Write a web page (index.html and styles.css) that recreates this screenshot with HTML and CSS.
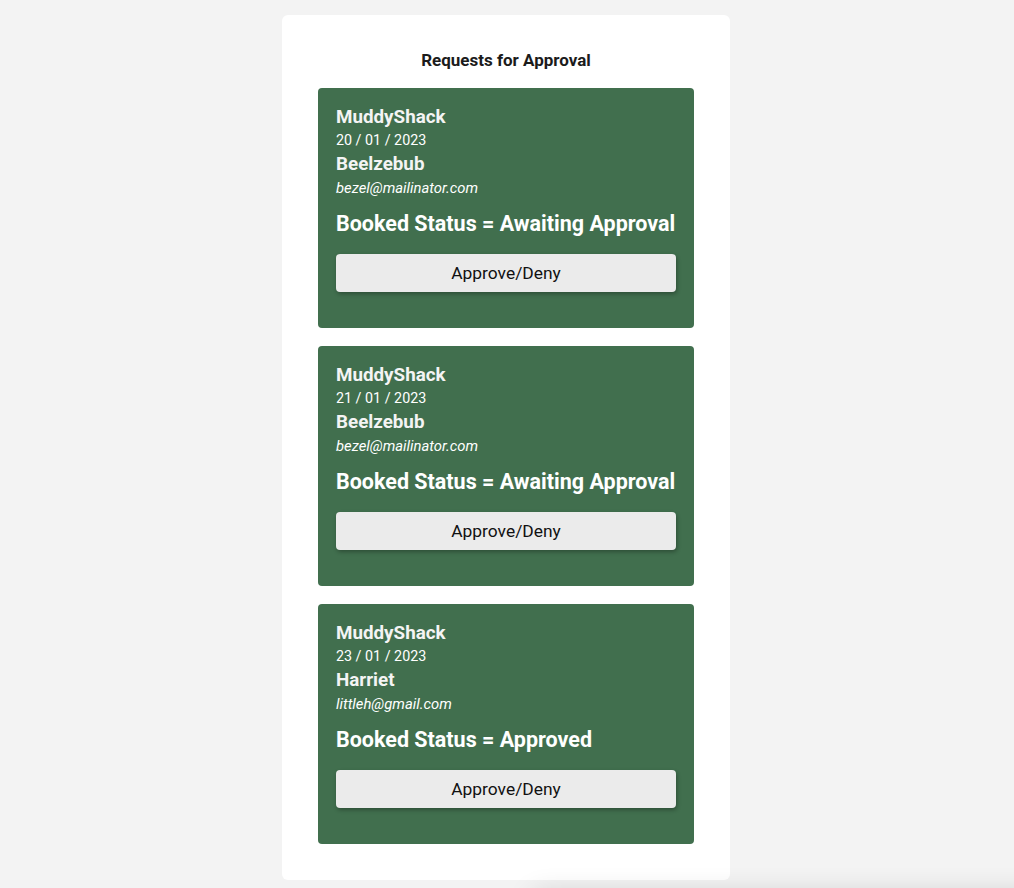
FILE: index.html
```html
<!DOCTYPE html>
<html>
<head>
<meta charset="utf-8">
<link rel="stylesheet" href="styles.css">
</head>
<body>
<main class="panel">
  <h2 class="title">Requests for Approval</h2>
  <div class="card">
    <h3 class="venue">MuddyShack</h3>
    <p class="date">20 / 01 / 2023</p>
    <h3 class="name">Beelzebub</h3>
    <p class="email">bezel@mailinator.com</p>
    <h2 class="status">Booked Status = Awaiting Approval</h2>
    <button class="btn">Approve/Deny</button>
  </div>
  <div class="card">
    <h3 class="venue">MuddyShack</h3>
    <p class="date">21 / 01 / 2023</p>
    <h3 class="name">Beelzebub</h3>
    <p class="email">bezel@mailinator.com</p>
    <h2 class="status">Booked Status = Awaiting Approval</h2>
    <button class="btn">Approve/Deny</button>
  </div>
  <div class="card">
    <h3 class="venue">MuddyShack</h3>
    <p class="date">23 / 01 / 2023</p>
    <h3 class="name">Harriet</h3>
    <p class="email">littleh@gmail.com</p>
    <h2 class="status">Booked Status = Approved</h2>
    <button class="btn">Approve/Deny</button>
  </div>
</main>
<div class="toast-shadow"></div>
</body>
</html>
```
FILE: styles.css
```css
html, body {
  margin: 0;
  padding: 0;
  background: #f3f3f3;
  font-family: Roboto, "Liberation Sans", sans-serif;
}
body {
  padding-top: 15px;
  overflow: hidden;
  height: 888px;
  box-sizing: border-box;
}
.panel {
  width: 448px;
  margin: 0 0 0 282px;
  background: #fff;
  border-radius: 6px;
  padding: 36px;
  box-sizing: border-box;
  display: flex;
  flex-direction: column;
  gap: 18px;
}
.title {
  margin: 0;
  font-size: 17px;
  font-weight: 700;
  color: #1b1b1b;
  text-align: center;
  line-height: 19px;
}
.card {
  background: #416f4e;
  border-radius: 4px;
  padding: 19px 18px 36px;
  display: flex;
  flex-direction: column;
  color: #f4f4f4;
}
.card h3, .card h2, .card p { margin: 0; }
.venue {
  font-size: 18.8px;
  font-weight: 700;
  line-height: 21px;
}
.date {
  margin-top: 4px !important;
  font-size: 14.3px;
  line-height: 16px;
  color: #fff;
}
.name {
  margin-top: 6px !important;
  font-size: 18.8px;
  font-weight: 700;
  line-height: 21px;
}
.email {
  margin-top: 5px !important;
  font-size: 14.8px;
  font-style: italic;
  line-height: 16px;
  color: #fff;
}
.status {
  margin-top: 16px !important;
  font-size: 21.5px;
  font-weight: 700;
  line-height: 24px;
  color: #fff;
  white-space: nowrap;
}
.btn {
  margin-top: 18px;
  height: 38px;
  border: none;
  border-radius: 4px;
  background: #ebebeb;
  color: #111;
  font-family: Roboto, "Liberation Sans", sans-serif;
  font-size: 17.4px;
  box-shadow: 1px 2px 4px rgba(0, 0, 0, 0.3);
  padding: 0;
}
.toast-shadow {
  position: fixed;
  left: 540px;
  right: -40px;
  top: 900px;
  height: 40px;
  box-shadow: 0 0 28px 6px rgba(0, 0, 0, 0.16);
  background: #ddd;
}
```
